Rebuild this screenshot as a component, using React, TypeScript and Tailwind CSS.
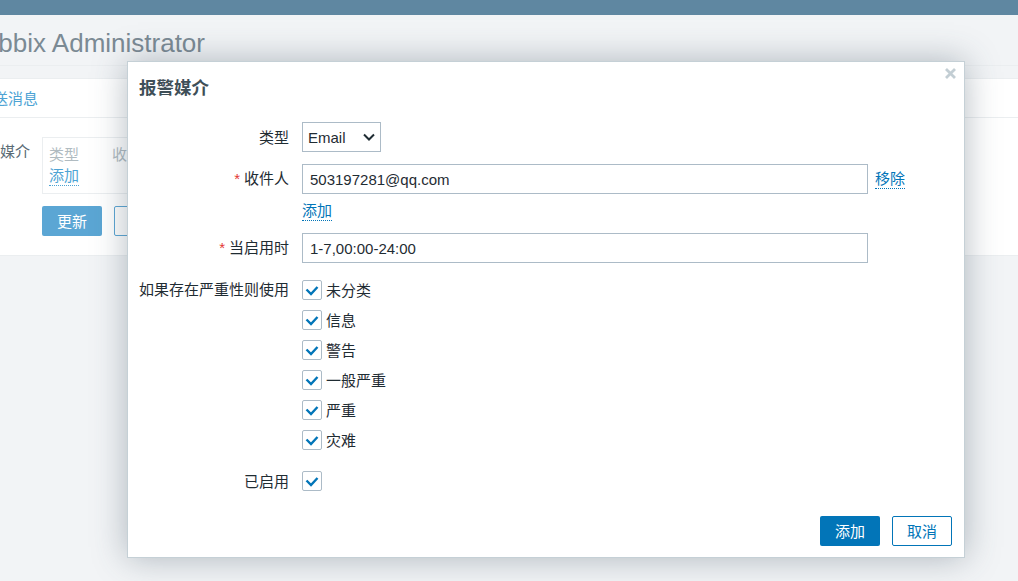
const font = `"Liberation Sans", "Noto Sans CJK SC", sans-serif`;

function Check() {
  return (
    <span className="flex h-5 w-5 shrink-0 items-center justify-center rounded-[2px] border border-[#acbbc7] bg-white">
      <svg width="14" height="11" viewBox="0 0 14 11" fill="none">
        <path d="M1.5 4.5 L6 9 L12.5 2" stroke="#0275b8" strokeWidth="2.4" />
      </svg>
    </span>
  );
}

function Label({ children, star }: { children: string; star?: boolean }) {
  return (
    <div className="whitespace-nowrap text-right text-[15px] leading-[18px] text-[#1f2c33]">
      {star && <span className="mr-[4px] text-[#e33734]">*</span>}
      {children}
    </div>
  );
}

function DottedLink({ children, muted }: { children: string; muted?: boolean }) {
  return (
    <a
      className={
        "block w-fit border-b border-dotted text-[15px] leading-[19px] " +
        (muted ? "border-[#4da3d4] text-[#4da3d4]" : "border-[#0275b8] text-[#0275b8]")
      }
    >
      {children}
    </a>
  );
}

const severities = ["未分类", "信息", "警告", "一般严重", "严重", "灾难"];

export default function App() {
  return (
    <div className="relative h-[581px] w-[1018px] overflow-hidden bg-[#f2f4f6]" style={{ fontFamily: font }}>
      <div className="h-[15px] bg-[#5f87a1]" />
      <div className="flex h-[51px] items-center border-b border-[#ebeef0] pt-[5px]">
        <h1 className="ml-[-32px] whitespace-nowrap text-[26px] font-normal leading-[30px] text-[#7b8a94]">
          Zabbix Administrator
        </h1>
      </div>

      {/* page behind the dialog */}
      <div className="mt-3 h-[178px] border-y border-[#ebeef0] bg-white">
        <div className="flex h-[39px] items-center border-b border-[#ebeef0] pt-[2px] text-[15px] text-[#4da3d4]">
          <span className="ml-[-22px]">发送消息</span>
        </div>
        <div className="flex pt-[19px]">
          <span className="ml-[-30px] w-[72px] shrink-0 whitespace-nowrap pt-[6px] text-[15px] leading-[18px] text-[#5a6b75]">
            报警媒介
          </span>
          <div>
            <div className="h-[57px] w-[120px] border border-[#ebeef0] px-[6px] pt-[8px]">
              <div className="flex gap-[33px] whitespace-nowrap text-[15px] leading-[18px] text-[#b0bbc1]">
                <span>类型</span>
                <span>收件人</span>
              </div>
              <div className="mt-[2px]">
                <DottedLink muted>添加</DottedLink>
              </div>
            </div>
            <div className="mt-[12px] flex gap-[12px]">
              <button className="h-[30px] w-[60px] rounded-[2px] bg-[#5ba6d4] pt-[2px] text-[15px] text-white">更新</button>
              <button className="h-[30px] w-[60px] rounded-[2px] border border-[#5ba6d4] bg-white" />
            </div>
          </div>
        </div>
      </div>

      {/* dialog */}
      <div className="absolute left-[127px] top-[61px] h-[497px] w-[838px] border border-[#c5d0d6] bg-white shadow-[0_0_32px_rgba(60,80,95,0.38)]">
        <svg className="absolute right-[8px] top-[6px]" width="11" height="11" viewBox="0 0 11 11" fill="none">
          <path d="M1 1 L10 10 M10 1 L1 10" stroke="#c3ced4" strokeWidth="2.8" />
        </svg>
        <h4 className="pl-[11px] pt-[14px] text-[17.5px] font-bold leading-[24px] text-[#3f4f58]">报警媒介</h4>

        <div className="mt-[22px] grid grid-cols-[150px_1fr] gap-x-[13px] pl-[11px]">
          <div className="pt-[7px]">
            <Label>类型</Label>
          </div>
          <div className="flex h-[30px] w-[79px] items-center justify-between border border-[#acbbc7] pl-[5px] pr-[5px] text-[15px] text-[#1f2c33]">
            <span className="pt-[2px]">Email</span>
            <svg width="12" height="8" viewBox="0 0 12 8" fill="none">
              <path d="M1 1.5 L6 6.5 L11 1.5" stroke="#1f2c33" strokeWidth="2" />
            </svg>
          </div>

          <div className="mt-[12px] pt-[6px]">
            <Label star>收件人</Label>
          </div>
          <div className="mt-[12px] flex items-center gap-[7px]">
            <div className="flex h-[30px] w-[566px] items-center border border-[#acbbc7] px-[7px] pt-[2px] text-[15px] text-[#1f2c33]">
              503197281@qq.com
            </div>
            <DottedLink>移除</DottedLink>
          </div>

          <div />
          <div className="mt-[7px] h-[23px]">
            <DottedLink>添加</DottedLink>
          </div>

          <div className="mt-[9px] pt-[6px]">
            <Label star>当启用时</Label>
          </div>
          <div className="mt-[9px] flex h-[30px] w-[566px] items-center border border-[#acbbc7] px-[7px] pt-[2px] text-[15px] text-[#1f2c33]">
            1-7,00:00-24:00
          </div>

          <div className="mt-[18px]">
            <Label>如果存在严重性则使用</Label>
          </div>
          <div className="mt-[17px] flex flex-col gap-[10px]">
            {severities.map((s) => (
              <div key={s} className="flex h-5 items-center gap-[4px] text-[15px] text-[#1f2c33]">
                <Check />
                <span className="pt-[2px]">{s}</span>
              </div>
            ))}
          </div>

          <div className="mt-[21px] pt-[2px]">
            <Label>已启用</Label>
          </div>
          <div className="mt-[21px]">
            <Check />
          </div>
        </div>

        <div className="mt-[25px] flex justify-end gap-[12px] pr-[12px]">
          <button className="h-[30px] w-[60px] rounded-[2px] bg-[#0275b8] pt-[2px] text-[15px] text-white">添加</button>
          <button className="h-[30px] w-[60px] rounded-[2px] border border-[#0275b8] bg-white pt-[2px] text-[15px] text-[#0275b8]">
            取消
          </button>
        </div>
      </div>
    </div>
  );
}
